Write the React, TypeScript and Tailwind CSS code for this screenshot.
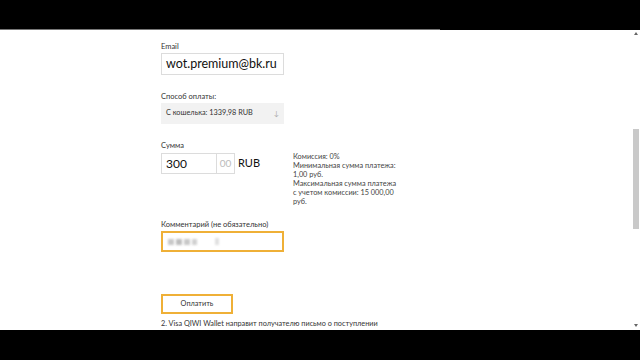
import React from 'react';

const infoLines = [
  'Комиссия: 0%',
  'Минимальная сумма платежа:',
  '1,00 руб.',
  'Максимальная сумма платежа',
  'с учетом комиссии: 15 000,00',
  'руб.',
];

const App: React.FC = () => {
  return (
    <div className="w-[640px] h-[360px] bg-black flex flex-col overflow-hidden" style={{ fontFamily: 'Lato, "Noto Sans", sans-serif' }}>
      <div className="h-[29px] shrink-0" />
      <div className="h-px w-[440px] bg-[#777] shrink-0" />
      <div className="h-[300px] shrink-0 bg-white flex">
        <main className="flex-1 pl-[161px] pt-[12px] text-[#333]">
          <div className="text-[7.5px] leading-[10px]">Email</div>
          <div className="mt-px w-[123px] h-[22px] border border-[#dcdcdc] flex items-center px-[4px] text-[12.5px] text-[#111] whitespace-nowrap">
            wot.premium@bk.ru
          </div>

          <div className="mt-[17px] text-[7.5px] leading-[10px]">Способ оплаты:</div>
          <div className="mt-px w-[123px] h-[21px] bg-[#f2f2f2] flex items-center justify-between px-[5px] text-[7.3px]">
            <span>С кошелька: 1339,98 RUB</span>
            <span className="text-[#aaa] text-[7px]">↓</span>
          </div>

          <div className="mt-[17px] text-[7.5px] leading-[10px]">Сумма</div>
          <div className="flex items-start mt-px">
            <div className="w-[132px] flex items-center mt-px">
              <div className="w-[56px] h-[21px] border border-[#dcdcdc] flex items-center px-[4px] text-[12px] text-[#111]">300</div>
              <div className="w-[18px] h-[21px] border border-l-0 border-[#dcdcdc] flex items-center justify-center text-[10px] text-[#bbb]">00</div>
              <span className="ml-[3px] text-[11px] text-[#111]">RUB</span>
            </div>
            <div className="text-[7.3px] leading-[8.9px] text-[#444] pt-[1px]">
              {infoLines.map((l) => (
                <div key={l}>{l}</div>
              ))}
            </div>
          </div>

          <div className="mt-[14px] text-[7.5px] leading-[10px]">Комментарий (не обязательно)</div>
          <div className="mt-px w-[123px] h-[21px] border-2 border-[#efb037] flex items-center px-[5px] gap-[2px]">
            <span className="w-[6px] h-[6px] bg-[#c8c8c8] blur-[1px]" />
            <span className="w-[6px] h-[6px] bg-[#bdbdbd] blur-[1px]" />
            <span className="w-[6px] h-[6px] bg-[#c8c8c8] blur-[1px]" />
            <span className="w-[5px] h-[6px] bg-[#d0d0d0] blur-[1px]" />
            <span className="ml-[16px] w-[4px] h-[7px] bg-[#e0e0e0] blur-[1px]" />
          </div>

          <button className="mt-[42px] w-[72px] h-[20px] border-2 border-[#efb037] bg-white text-[7.3px] text-[#333] flex items-center justify-center">
            Оплатить
          </button>
          <div className="mt-[5px] text-[7.3px] leading-[10px] text-[#333] whitespace-nowrap">
            2. Visa QIWI Wallet направит получателю письмо о поступлении
          </div>
        </main>
        <div className="w-[8px] flex flex-col items-center">
          <div className="mt-[2px] w-0 h-0 border-l-[2px] border-r-[2px] border-b-[3px] border-l-transparent border-r-transparent border-b-[#666]" />
          <div className="mt-[94px] w-[6px] h-[100px] bg-[#c9c9c9]" />
          <div className="mt-auto mb-[3px] w-0 h-0 border-l-[2px] border-r-[2px] border-t-[3px] border-l-transparent border-r-transparent border-t-[#666]" />
        </div>
      </div>
      <div className="flex-1" />
    </div>
  );
};

export default App;
